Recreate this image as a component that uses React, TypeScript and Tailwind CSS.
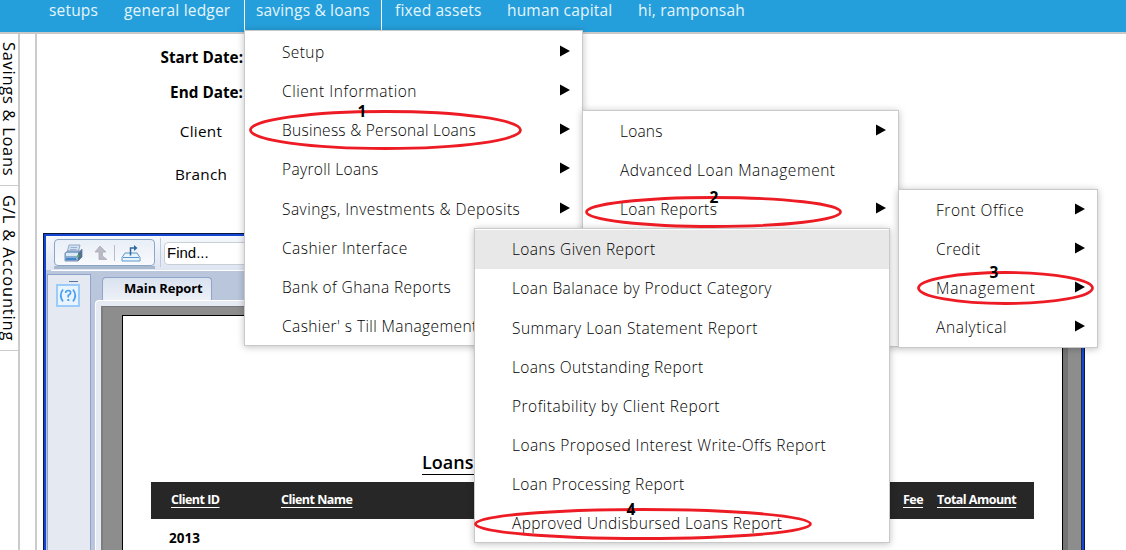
import React from "react";

type Item = { label: string; arrow?: boolean; track?: string };

const Arrow = () => (
  <svg width="10" height="12" viewBox="0 0 10 12" className="relative -top-px shrink-0">
    <path d="M0 0.5L10 6L0 11.5Z" fill="#000" />
  </svg>
);

function Menu({ items, className, activeIndex }: { items: Item[]; className: string; activeIndex?: number }) {
  return (
    <ul className={`absolute border border-[#c9c9c9] bg-white shadow-[0_1px_7px_rgba(0,0,0,0.25)] ${className}`}>
      {items.map((item, i) => (
        <li
          key={item.label}
          className={`flex h-[39.15px] items-center justify-between pr-[12px] pl-[37px] ${i === activeIndex ? "bg-[#e8e8e8]" : ""}`}
        >
          <span className={`text-[15.5px] leading-5 font-[330] whitespace-nowrap ${item.track ?? "tracking-[0.4px]"}`}>{item.label}</span>
          {item.arrow && <Arrow />}
        </li>
      ))}
    </ul>
  );
}

const savings: Item[] = [
  { label: "Setup", arrow: true },
  { label: "Client Information", arrow: true, track: "tracking-[0.55px]" },
  { label: "Business & Personal Loans", arrow: true, track: "tracking-[0.27px]" },
  { label: "Payroll Loans", arrow: true, track: "tracking-[0.33px]" },
  { label: "Savings, Investments & Deposits", arrow: true, track: "tracking-[0.46px]" },
  { label: "Cashier Interface", track: "tracking-[0.46px]" },
  { label: "Bank of Ghana Reports" },
  { label: "Cashier' s Till Management" },
];
const loans: Item[] = [
  { label: "Loans", arrow: true, track: "tracking-[0.2px]" },
  { label: "Advanced Loan Management", track: "tracking-[0.54px]" },
  { label: "Loan Reports", arrow: true, track: "tracking-[0.36px]" },
];
const reportGroups: Item[] = [
  { label: "Front Office", arrow: true, track: "tracking-[0.55px]" },
  { label: "Credit", arrow: true },
  { label: "Management", arrow: true, track: "tracking-[0.75px]" },
  { label: "Analytical", arrow: true, track: "tracking-[0.6px]" },
];
const reports: Item[] = [
  { label: "Loans Given Report" },
  { label: "Loan Balanace by Product Category" },
  { label: "Summary Loan Statement Report", track: "tracking-[0.47px]" },
  { label: "Loans Outstanding Report", track: "tracking-[0.36px]" },
  { label: "Profitability by Client Report", track: "tracking-[0.5px]" },
  { label: "Loans Proposed Interest Write-Offs Report", track: "tracking-[0.43px]" },
  { label: "Loan Processing Report", track: "tracking-[0.34px]" },
  { label: "Approved Undisbursed Loans Report", track: "tracking-[0.36px]" },
];

const marks = [
  { n: "1", cx: 385.5, cy: 130, rx: 135, ry: 18.5, tx: 362, ty: 117 },
  { n: "2", cx: 713.5, cy: 212, rx: 127, ry: 14.5, tx: 714, ty: 203 },
  { n: "3", cx: 1005.5, cy: 288, rx: 87, ry: 15.5, tx: 994, ty: 278 },
  { n: "4", cx: 643, cy: 524, rx: 167.5, ry: 14.5, tx: 631, ty: 515 },
];

function Printer() {
  return (
    <svg width="20" height="18" viewBox="0 0 20 18">
      <path d="M5 1H16L14 9H3Z" fill="#d3e2f3" stroke="#93a8c4" />
      <path d="M6.5 3.5H13M6 5.5H12.5" stroke="#9ab2d0" />
      <path d="M1 9L4 7H16L18 5V13L14 17H1Z" fill="#8aabd0" stroke="#7893b8" />
      <path d="M2 9H14V12H2Z" fill="#dce9f6" />
      <path d="M2 14H12V16H2Z" fill="#3f86cb" />
      <path d="M14 9L18 6V13L14 17Z" fill="#56718f" />
      <path d="M13 11h2v2h-2z" fill="#4dbb55" />
    </svg>
  );
}

export default function App() {
  return (
    <div className="relative flex h-[550px] w-[1126px] flex-col overflow-hidden bg-white font-['Open_Sans','Noto_Sans',sans-serif] text-black">
      <nav className="flex h-[34px] shrink-0 border-b-2 border-[#c8c8c8] bg-[#259fdb] pl-[49px] text-[15.5px] leading-[20px] font-normal tracking-[0.18px] whitespace-nowrap text-[#e4f5fd]">
        <span className="w-[75px]">setups</span>
        <span className="w-[120px]">general ledger</span>
        <span className="h-[31px] w-[138px] border-x border-white pl-[11px]">savings &amp; loans</span>
        <span className="ml-[13px] w-[112px]">fixed assets</span>
        <span className="w-[131px]">human capital</span>
        <span>hi, ramponsah</span>
      </nav>

      <div className="flex min-h-0 flex-1">
        <aside className="flex w-5 shrink-0 flex-col border-r-2 border-[#cbcbcb] text-[16.5px] leading-[18px] whitespace-nowrap">
          <div className="h-[152px] border-b border-[#cbcbcb] pt-[8px] tracking-[0.7px] [writing-mode:vertical-rl]">Savings &amp; Loans</div>
          <div className="h-[165px] border-b border-[#cbcbcb] pt-[9px] tracking-[0.85px] [writing-mode:vertical-rl]">G/L &amp; Accounting</div>
        </aside>

        <main className="ml-[15px] flex flex-1 flex-col border-l-2 border-[#cbcbcb]">
          <div className="ml-[122px] flex h-[199px] w-[84px] shrink-0 flex-col pt-[6px] text-center text-[15.3px] whitespace-nowrap">
            <b className="h-[35px] text-right leading-[35px]">Start Date:</b>
            <b className="h-[35px] text-right leading-[35px]">End Date:</b>
            <span className="h-[43px] leading-[43px] tracking-[0.25px]">Client</span>
            <span className="h-[43px] leading-[43px] tracking-[0.25px]">Branch</span>
          </div>

          <section className="ml-[6px] flex w-[1042px] flex-1 flex-col border border-b-0 border-[#0b1a3c] bg-[#b9c6dc]">
            <div className="flex flex-1 flex-col border-x-2 border-t-2 border-[#1446d2]">
              <div className="flex h-[34px] shrink-0 bg-linear-to-b from-[#f5f8fc] to-[#dfe6f1] pl-[8px]">
                <div className="mt-[3px] flex h-[30px] w-[101px] flex-col">
                  <div className="flex h-[27px] shrink-0 items-center rounded-sm border border-[#89a6c8] bg-linear-to-b from-[#e9eff7] to-[#f8fafd] pl-[9px]">
                    <Printer />
                    <svg className="ml-[10px]" width="14" height="16" viewBox="0 0 14 16">
                      <path d="M6 1L12 7H8.5V11L13 14.5H5V7H1Z" fill="#b9bac5" stroke="#a6a8b5" strokeWidth=".7" />
                    </svg>
                    <div className="ml-[6px] h-4 w-px bg-[#b9bdcb]" />
                    <svg className="ml-[6px]" width="20" height="18" viewBox="0 0 20 18">
                      <path d="M4 9L1 13.500V17H19V13.500L16 9Z" fill="#e9f4fd" stroke="#5b98c9" />
                      <path d="M2 13.500H18" stroke="#5b98c9" />
                      <path d="M9.500 11.500V4H14" fill="none" stroke="#30689c" strokeWidth="1.500" />
                      <path d="M13 1L16.500 4L13 7Z" fill="#30689c" />
                    </svg>
                  </div>
                  <div className="h-[3px] bg-[#a8b8cd]" />
                </div>
                <div className="mt-[2px] ml-[5px] h-[29px] w-px bg-[#bfccdf]" />
                <div className="mt-[6px] ml-[3px] flex h-[23px] w-[200px] items-center rounded-l border border-[#c9cfd8] bg-white pl-[2px] font-['Liberation_Sans',Arial,sans-serif] text-[15px]">Find...</div>
              </div>
              <div className="ml-[5px] h-px shrink-0 bg-white" />
              <div className="flex min-h-0 flex-1">
                <div className="mt-[3px] ml-px flex w-[44px] flex-col items-center border border-b-0 border-[#8fa4c8] bg-[#e4e9f2] pt-[6px] pr-[2px]">
                  <div className="ml-[10px] h-px w-[9px] bg-[#587497]" />
                  <svg className="mt-[2px]" width="24" height="23" viewBox="0 0 24 23">
                    <rect x="1" y="1" width="22" height="21" fill="#e8f4ff" stroke="#9bcbf8" strokeWidth="2" />
                    <path d="M7 5.500Q2.500 11.500 7 17.500M17 5.500Q21.500 11.500 17 17.500M9.600 9Q9.800 6.500 12.200 6.500Q14.800 6.500 14.600 8.900Q14.400 10.200 12.200 11.500V13.500" fill="none" stroke="#4b9ff0" strokeWidth="1.7" />
                    <rect x="11.300" y="15" width="2" height="2" fill="#4b9ff0" />
                  </svg>
                </div>
                <div className="ml-[4px] flex flex-1 flex-col pt-[6px]">
                  <div className="ml-[7px] h-[23px] w-[110px] shrink-0 rounded-t border border-b-0 border-[#8fa4c8] bg-linear-to-b from-[#d9e2ef] to-[#edf1f7] pl-[21px] text-[13px] leading-[20px] font-bold tracking-[-0.15px] whitespace-nowrap">Main Report</div>
                  <div className="flex min-h-0 flex-1 rounded-tl border-t border-l border-white bg-[#e6eaf3] pt-[5px] pl-[5px]">
                    <div className="flex flex-1 border-t border-r border-l-2 border-t-[#777] border-r-[#222b44] border-l-[#7d7d7d] bg-[#8d8d8d] pt-[8px] pr-[13px] pl-[19px]">
                      <div className="flex flex-1 border-r-[5px] border-[#747474]">
                        <div className="flex flex-1 flex-col border border-b-0 border-black bg-white pl-[28px]">
                          <div className="mt-[133px] ml-[271px] h-[33px] text-[18px] leading-[26px] font-[550] whitespace-nowrap underline decoration-1 underline-offset-[5px]">Loans Given Report</div>
                          <div className="flex h-[37px] w-[883px] shrink-0 bg-[#272727] pl-[20px] text-[12.5px] leading-[35px] font-bold tracking-[-0.53px] whitespace-nowrap text-white underline underline-offset-[3px]">
                            <span className="w-[110px]">Client ID</span>
                            <span className="w-[622px]">Client Name</span>
                            <span className="w-[34px]">Fee</span>
                            <span>Total Amount</span>
                          </div>
                          <b className="pt-[9px] pl-[18px] text-[13.5px] leading-5">2013</b>
                        </div>
                      </div>
                    </div>
                  </div>
                </div>
              </div>
            </div>
          </section>
        </main>
      </div>

      <Menu items={savings} className="top-[30px] left-[244px] h-[316px] w-[339px] pt-[1.5px]" />
      <Menu items={loans} className="top-[110px] left-[582px] h-[237px] w-[317px] pt-[0.3px]" />
      <Menu items={reportGroups} className="top-[189px] left-[898px] h-[159px] w-[200px] pt-[0.3px]" />
      <Menu items={reports} activeIndex={0} className="top-[228px] left-[474px] h-[315px] w-[416px] pt-[0.7px]" />

      <svg className="absolute inset-0" width="1126" height="550">
        {marks.map((m) => (
          <g key={m.n}>
            <ellipse cx={m.cx} cy={m.cy} rx={m.rx} ry={m.ry} fill="none" stroke="#ed1c24" strokeWidth="2.8" />
            <text x={m.tx} y={m.ty} textAnchor="middle" fontSize="15.5" fontWeight="700">{m.n}</text>
          </g>
        ))}
      </svg>
    </div>
  );
}
